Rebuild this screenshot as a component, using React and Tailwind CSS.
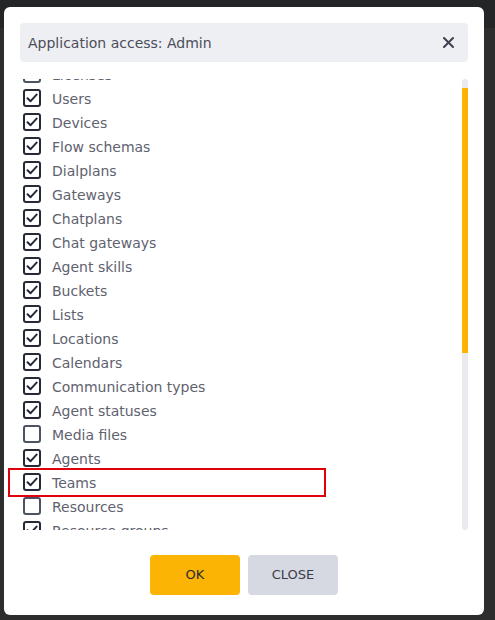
import React from "react";

const items = [
  ["Licenses", false],
  ["Users", true],
  ["Devices", true],
  ["Flow schemas", true],
  ["Dialplans", true],
  ["Gateways", true],
  ["Chatplans", true],
  ["Chat gateways", true],
  ["Agent skills", true],
  ["Buckets", true],
  ["Lists", true],
  ["Locations", true],
  ["Calendars", true],
  ["Communication types", true],
  ["Agent statuses", true],
  ["Media files", false],
  ["Agents", true],
  ["Teams", true],
  ["Resources", false],
  ["Resource groups", true],
  ["Queues", true],
  ["Members", true],
];

function Checkbox({ checked }) {
  return (
    <div
      className={
        "w-[18px] h-[18px] rounded-[3px] border-2 flex items-center justify-center shrink-0 " +
        (checked ? "border-[#262a36]" : "border-[#4d5262]")
      }
    >
      {checked && (
        <svg width="12" height="12" viewBox="0 0 12 12" fill="none">
          <path d="M1.5 6.2 L4.6 9.2 L10.6 2.6" stroke="#262a36" strokeWidth="2" strokeLinecap="round" strokeLinejoin="round" />
        </svg>
      )}
    </div>
  );
}

export default function App() {
  return (
    <div
      className="w-[495px] h-[620px] overflow-hidden bg-[linear-gradient(#242526_28px,#2d2d2d_28px)] pt-[7px] pl-[4px]"
      style={{ fontFamily: '"DejaVu Sans", sans-serif' }}
    >
      <div className="relative w-[480px] h-[608px] bg-white rounded-[6px] px-[16px] pt-[16px] flex flex-col">
        <div className="h-[39px] bg-[#eeeff3] rounded-[4px] flex items-center justify-between pl-[8px] pr-[14px]">
          <span className="text-[14px] text-[#4b4d5a] mt-[2px]">Application access: Admin</span>
          <svg width="11" height="11" viewBox="0 0 11 11">
            <path d="M1 1 L10 10 M10 1 L1 10" stroke="#3e4150" strokeWidth="2" strokeLinecap="round" />
          </svg>
        </div>
        <div className="mt-[17px] h-[451px] flex">
          <div className="flex-1 overflow-hidden">
            <div className="-mt-[17px] flex flex-col">
              {items.map(([label, checked]) => (
                <div key={label} className="h-[24px] flex items-center pl-[3px] gap-[11px]">
                  <Checkbox checked={checked} />
                  <span className="text-[14px] text-[#60626e] leading-none mt-[2px]">{label}</span>
                </div>
              ))}
            </div>
          </div>
          <div className="w-[6px] h-full bg-[#e9eaee] rounded-[3px] pt-[9px]">
            <div className="h-[265px] bg-[#fbb404]" />
          </div>
        </div>
        <div className="mt-[25px] flex justify-center gap-[8px]">
          <button className="w-[90px] h-[40px] rounded-[4px] bg-[#fbb404] text-[13px] font-medium text-[#2a2a33]">OK</button>
          <button className="w-[90px] h-[40px] rounded-[4px] bg-[#d6d9e2] text-[13px] font-medium text-[#3a3c48]">CLOSE</button>
        </div>
        <div className="absolute left-[4px] top-[461px] w-[318px] h-[29px] border-2 border-[#e0000b] pointer-events-none" />
      </div>
    </div>
  );
}
